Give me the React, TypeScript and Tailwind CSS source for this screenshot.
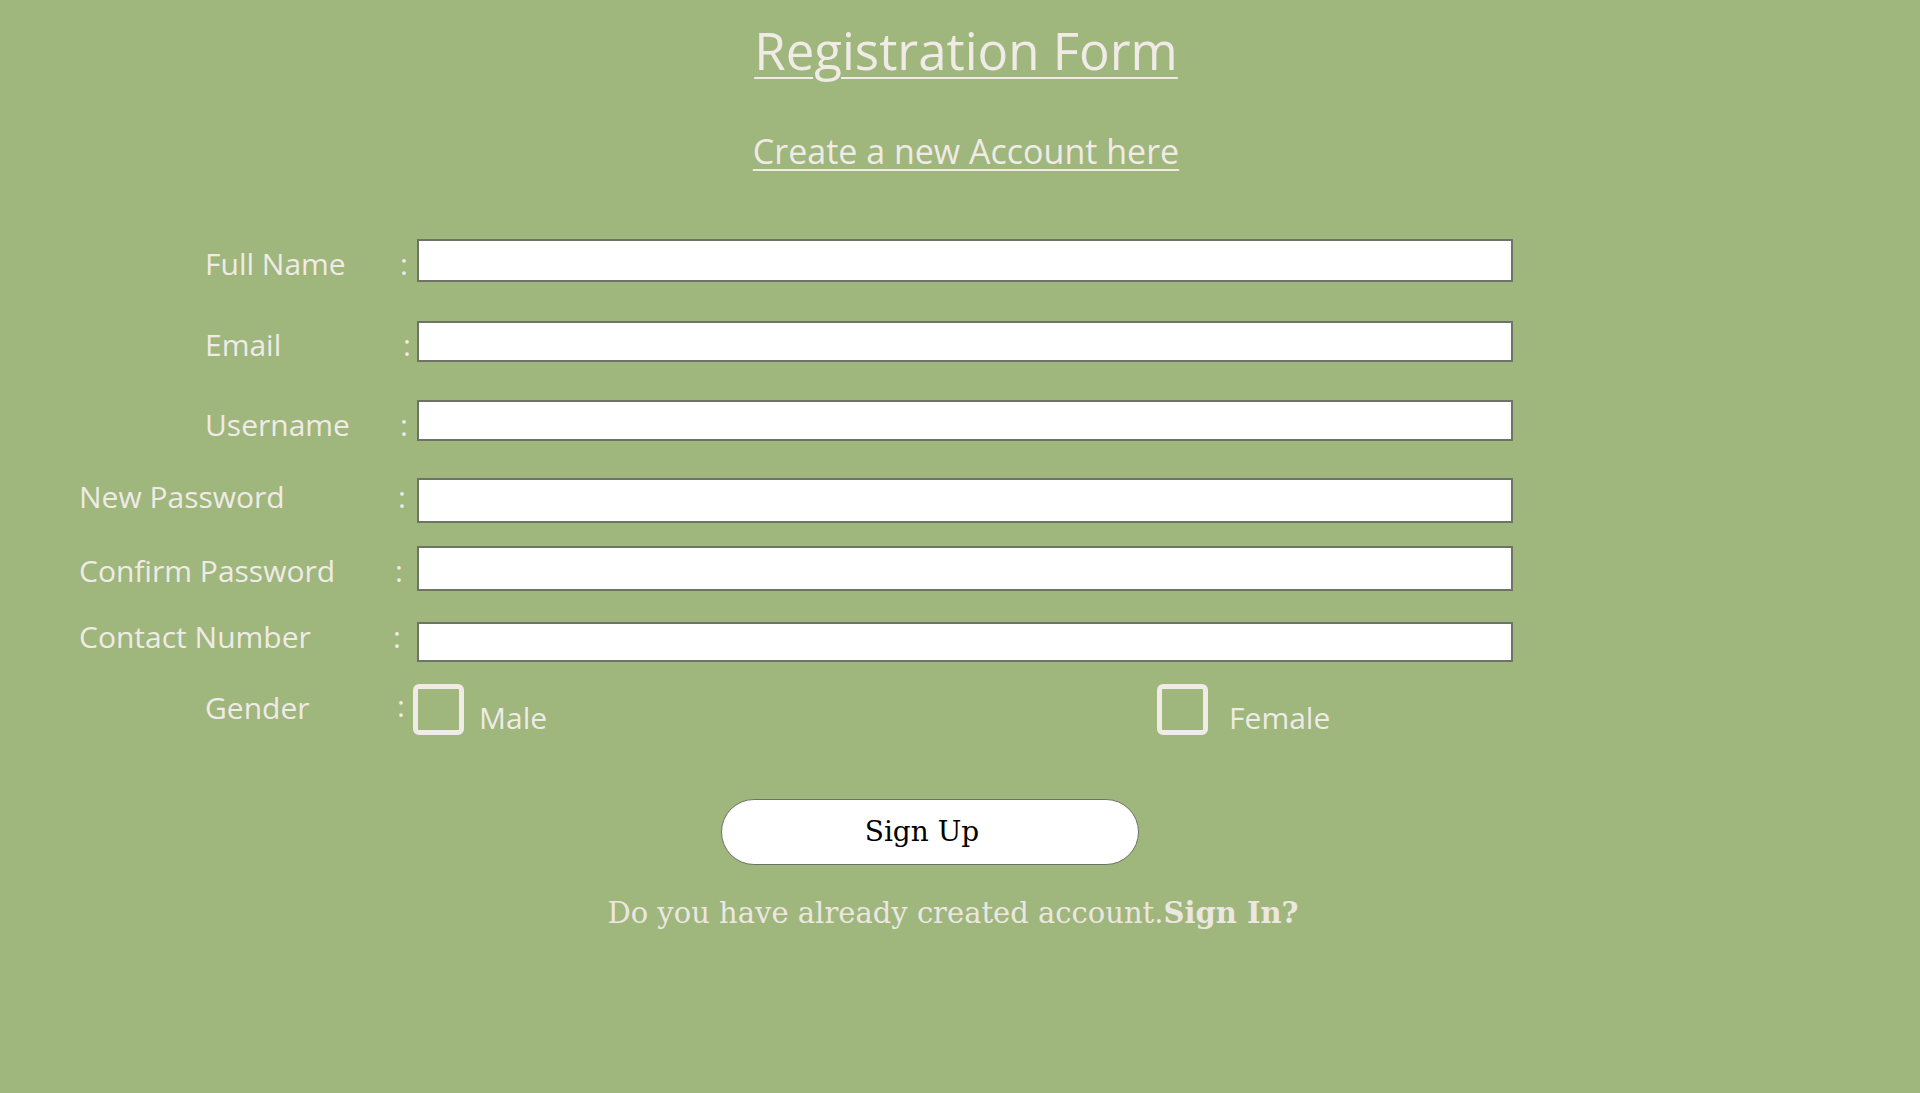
import React from "react";

const fields = [
  { label: "Full Name", indent: true, top: "mt-[67px]", h: "h-[43px]", colon: "pl-[11px]", shift: "translate-y-[3px]" },
  { label: "Email", indent: true, top: "mt-[39px]", h: "h-[41px]", colon: "pl-[14px]", shift: "translate-y-[3px]" },
  { label: "Username", indent: true, top: "mt-[38px]", h: "h-[41px]", colon: "pl-[11px]", shift: "translate-y-[4px]" },
  { label: "New Password", indent: false, top: "mt-[37px]", h: "h-[45px]", colon: "pl-[9px]", shift: "-translate-y-[4px]" },
  { label: "Confirm Password", indent: false, top: "mt-[23px]", h: "h-[45px]", colon: "pl-[6px]", shift: "translate-y-[2px]" },
  { label: "Contact Number", indent: false, top: "mt-[31px]", h: "h-[40px]", colon: "pl-[4px]", shift: "-translate-y-[5px]" },
];

export default function App() {
  return (
    <div
      className="w-full min-h-[1093px] bg-[#9fb67d] text-[#f0ebe6]"
      style={{ fontFamily: '"Open Sans", "Noto Sans", sans-serif' }}
    >
      <div className="flex flex-col items-center pt-[16px] pl-[12px]">
        <h1 className="text-[51px] leading-[68px] font-normal underline decoration-2 underline-offset-[7px]">
          Registration Form
        </h1>
        <p className="mt-[46px] text-[34px] leading-[42px] underline decoration-[1.5px] underline-offset-[5px]">
          Create a new Account here
        </p>
      </div>

      <div className="pl-[79px]">
        {fields.map((f) => (
          <div key={f.label} className={`flex items-center ${f.top}`}>
            <div className={`w-[310px] text-[30px] leading-[36px] ${f.shift} ${f.indent ? "pl-[126px]" : ""}`}>
              {f.label}
            </div>
            <span className={`w-[28px] text-[30px] leading-[36px] ${f.shift} ${f.colon}`}>:</span>
            <input
              type="text"
              className={`w-[1096px] bg-white border-2 border-[#6d7466] outline-none ${f.h}`}
              aria-label={f.label}
            />
          </div>
        ))}

        <div className="flex items-center mt-[22px]">
          <div className="w-[310px] pl-[126px] text-[30px] leading-[36px] -translate-y-[2px]">Gender</div>
          <span className="w-[24px] pl-[8px] text-[30px] leading-[36px] -translate-y-[4px]">:</span>
          <div className="w-[51px] h-[51px] rounded-[6px] border-[5px] border-[#f0ebe6]" />
          <span className="ml-[15px] text-[30px] leading-[36px] translate-y-[8px]">Male</span>
          <div className="ml-[610px] w-[51px] h-[51px] rounded-[6px] border-[5px] border-[#f0ebe6]" />
          <span className="ml-[21px] text-[30px] leading-[36px] translate-y-[8px]">Female</span>
        </div>
      </div>

      <div className="flex flex-col items-center pr-[60px]">
        <button
          className="mt-[64px] w-[418px] h-[66px] rounded-full bg-white border border-[#6d7466] text-black text-[28px] pr-[16px]"
          style={{ fontFamily: '"DejaVu Serif", "Liberation Serif", serif' }}
        >
          Sign Up
        </button>
        <p
          className="mt-[30px] ml-[46px] text-[29px] leading-[36px] text-[#ece7e1]"
          style={{ fontFamily: '"DejaVu Serif", "Liberation Serif", serif' }}
        >
          Do you have already created account.<span className="font-bold">Sign In?</span>
        </p>
      </div>
    </div>
  );
}
